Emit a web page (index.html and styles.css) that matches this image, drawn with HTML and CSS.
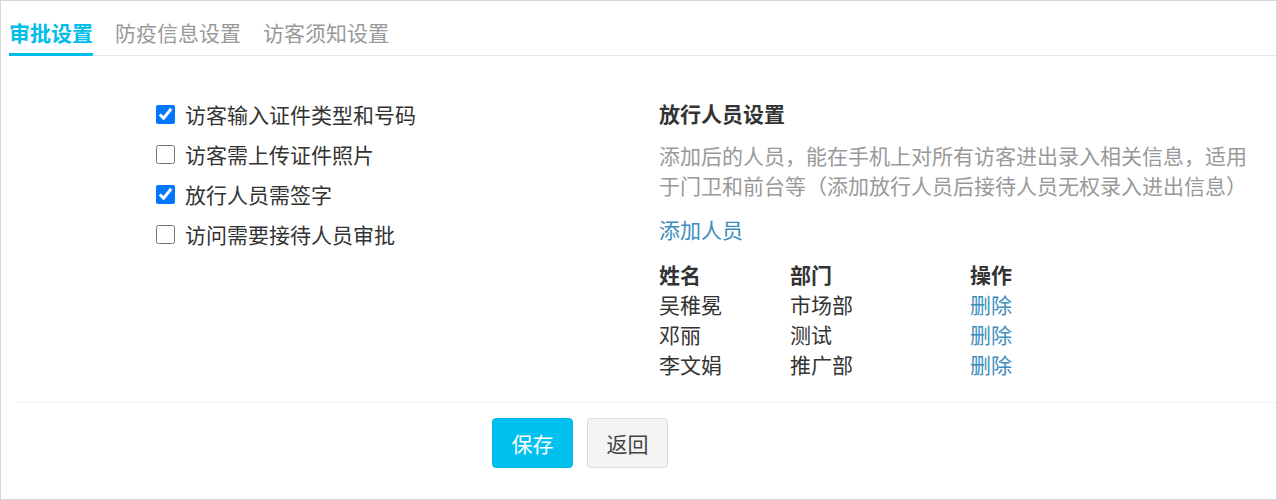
FILE: index.html
```html
<!DOCTYPE html>
<html lang="zh-CN">
<head>
    <meta charset="UTF-8">
    <meta name="viewport" content="width=device-width, initial-scale=1.0">
    <title>审批设置</title>
    <link rel="stylesheet" href="styles.css">
</head>
<body>

    <div class="settings-panel">
        <ul class="tabs">
            <li class="tab active">审批设置</li>
            <li class="tab">防疫信息设置</li>
            <li class="tab">访客须知设置</li>
        </ul>

        <div class="settings-body">
            <div class="options">
                <label class="option"><input type="checkbox" checked> 访客输入证件类型和号码</label>
                <label class="option"><input type="checkbox"> 访客需上传证件照片</label>
                <label class="option"><input type="checkbox" checked> 放行人员需签字</label>
                <label class="option"><input type="checkbox"> 访问需要接待人员审批</label>
            </div>

            <div class="release-staff">
                <h3>放行人员设置</h3>
                <p class="hint">添加后的人员，能在手机上对所有访客进出录入相关信息，适用于门卫和前台等（添加放行人员后接待人员无权录入进出信息）</p>
                <a href="#" class="add-link">添加人员</a>

                <table class="staff-table">
                    <thead>
                        <tr><th class="col-name">姓名</th><th class="col-dept">部门</th><th>操作</th></tr>
                    </thead>
                    <tbody>
                        <tr><td>吴稚冕</td><td>市场部</td><td><a href="#">删除</a></td></tr>
                        <tr><td>邓丽</td><td>测试</td><td><a href="#">删除</a></td></tr>
                        <tr><td>李文娟</td><td>推广部</td><td><a href="#">删除</a></td></tr>
                    </tbody>
                </table>
            </div>
        </div>

        <div class="form-footer">
            <button type="submit" class="btn btn-save">保存</button>
            <button type="button" class="btn btn-back">返回</button>
        </div>
    </div>

</body>
</html>
```

FILE: styles.css
```css
body {
    margin: 0;
    font-family: "Microsoft YaHei", "Noto Sans CJK SC", sans-serif;
    font-size: 21px;
    color: #333;
    background-color: #fff;
}
.settings-panel {
    height: 500px;
    box-sizing: border-box;
    border: 1px solid #d6d6d6;
}

/* onglets */
.tabs {
    list-style: none;
    margin: 0 0 0 8px;
    padding: 0;
    display: flex;
    gap: 22px;
    border-bottom: 1px solid #e8e8e8;
}
.tab {
    padding: 16px 0 6px;
    line-height: 30px;
    color: #999;
    border-bottom: 3px solid transparent;
    margin-bottom: -1px;
    cursor: pointer;
}
.tab.active {
    color: #00bde9;
    font-weight: bold;
    border-bottom-color: #00bde9;
}

/* contenu */
.settings-body {
    display: flex;
    padding: 38px 0 23px 155px;
}
.options {
    width: 503px;
}
.option {
    display: flex;
    align-items: center;
    gap: 10px;
    height: 40px;
}
.option input {
    width: 19px;
    height: 19px;
    margin: 0;
    accent-color: #0075ff;
}
.release-staff {
    width: 600px;
}
.release-staff h3 {
    margin: 0;
    font-size: 21px;
    line-height: 38px;
}
.hint {
    margin: 8px 0 0;
    line-height: 30px;
    color: #999;
}
.add-link {
    display: block;
    margin-top: 14px;
    line-height: 30px;
}
a {
    color: #3c8dbc;
    text-decoration: none;
}
.staff-table {
    margin-top: 15px;
    border-collapse: collapse;
}
.staff-table th, .staff-table td {
    padding: 0;
    height: 30px;
    line-height: 30px;
    text-align: left;
}
.col-name {
    width: 131px;
}
.col-dept {
    width: 180px;
}

/* pied du formulaire */
.form-footer {
    margin-left: 16px;
    border-top: 1px solid #f0f0f0;
    padding: 15px 0 0 475px;
    display: flex;
    gap: 14px;
}
.btn {
    width: 81px;
    height: 50px;
    border-radius: 4px;
    font-family: inherit;
    font-size: 21px;
    cursor: pointer;
}
.btn-save {
    background-color: #00c0ef;
    border: 1px solid #00b5e2;
    color: #fff;
}
.btn-back {
    background-color: #f4f4f4;
    border: 1px solid #ddd;
    color: #444;
}
```
